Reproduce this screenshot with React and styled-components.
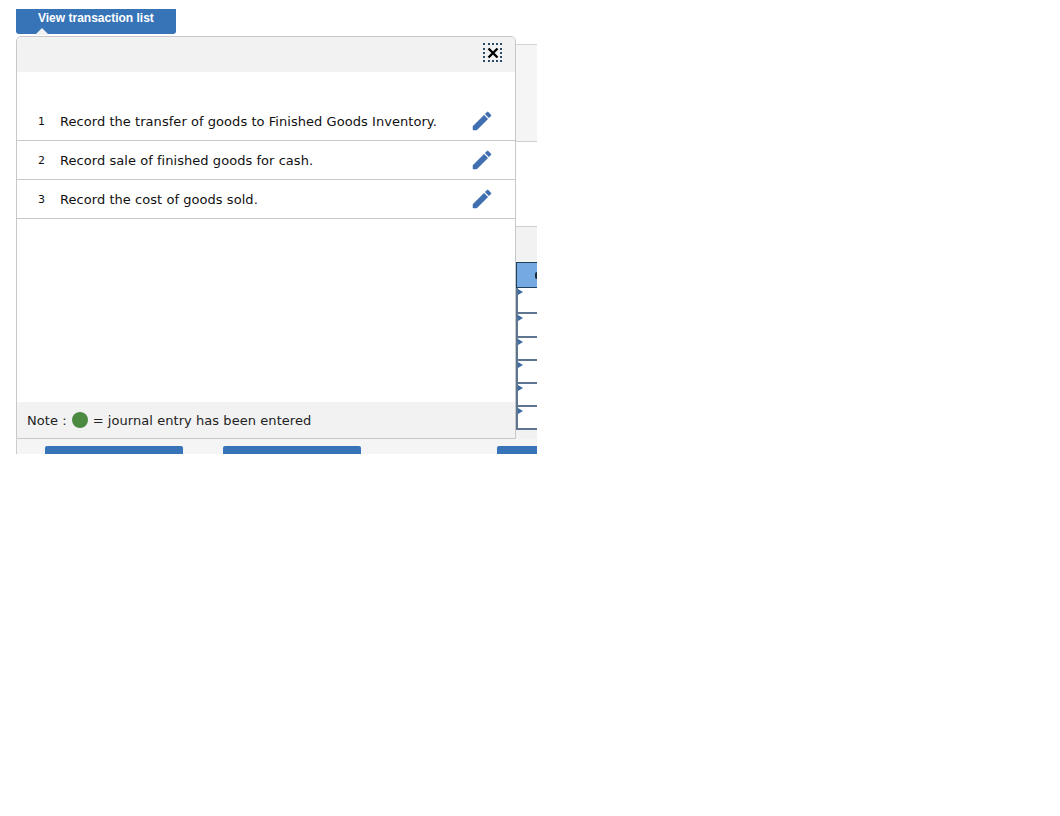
import React from "react";
import styled, { createGlobalStyle } from "styled-components";

const Global = createGlobalStyle`
  html, body { margin: 0; padding: 0; background: #fff; }
  body { font-family: "DejaVu Sans", Verdana, sans-serif; }
`;

const Page = styled.div`
  padding: 9px 0 0 16px;
`;

const Stage = styled.div`
  position: relative;
  width: 521px;
  height: 445px;
  overflow: hidden;
  background: #fff;
`;

const TabButton = styled.button`
  display: block;
  box-sizing: border-box;
  width: 160px;
  height: 25px;
  margin: 0;
  padding: 0 0 8px 22px;
  border: 0;
  border-radius: 0 0 3px 3px;
  background: #3673b7;
  color: #fff;
  font: bold 12px "Liberation Sans", Arial, sans-serif;
  text-align: left;
`;

const Behind = styled.div`
  padding: 10px 0 0 0;
  display: flex;
  flex-direction: column;
  background: #fff;
`;

const Summary = styled.div`
  height: 96px;
  background: #f5f5f5;
  border-top: 1px solid #d4d4d4;
  border-bottom: 1px solid #cfcfcf;
`;

const Gap = styled.div`
  height: 84px;
`;

const Worksheet = styled.div`
  height: 213px;
  background: #f2f2f2;
  border-top: 1px solid #cfcfcf;
  padding: 35px 0 0 500px;
  box-sizing: border-box;
`;

const SheetHeader = styled.div`
  position: relative;
  box-sizing: border-box;
  height: 26px;
  background: #74a9e2;
  border: 1px solid #20405f;
  border-right: 0;
  &::after {
    content: "";
    position: absolute;
    right: 0;
    top: 9px;
    width: 2px;
    height: 7px;
    border-radius: 2px 0 0 2px;
    background: #1a2a3a;
  }
`;

const SheetRow = styled.div`
  position: relative;
  box-sizing: border-box;
  height: ${(p) => p.$h}px;
  background: #fff;
  border-left: 2px solid #5d7690;
  border-bottom: 2px solid #5d7690;
  &::before {
    content: "";
    position: absolute;
    left: 0;
    top: 1px;
    border-left: 5px solid #3f6da3;
    border-top: 3px solid transparent;
    border-bottom: 3px solid transparent;
  }
`;

const Footer = styled.div`
  display: flex;
  background: #f5f5f6;
  border-left: 1px solid #cccccc;
  padding: 7px 0 0 28px;
  gap: 40px;
`;

const FooterButton = styled.div`
  width: 138px;
  height: 20px;
  flex: none;
  background: #3673b7;
  border-radius: 2px 2px 0 0;
  margin-left: ${(p) => p.$ml || 0}px;
`;

const Panel = styled.div`
  position: absolute;
  left: 0;
  top: 27px;
  box-sizing: border-box;
  width: 500px;
  height: 403px;
  display: flex;
  flex-direction: column;
  background: #fff;
  border: 1px solid #c8c8c8;
  border-radius: 5px 5px 0 0;
  color: #111;
`;

const Caret = styled.div`
  position: absolute;
  left: 18px;
  top: -9px;
  width: 0;
  height: 0;
  border-left: 7px solid transparent;
  border-right: 7px solid transparent;
  border-bottom: 7px solid #f2f2f2;
`;

const PanelHead = styled.div`
  flex: none;
  height: 35px;
  background: #f2f2f2;
  border-radius: 5px 5px 0 0;
  display: flex;
  justify-content: flex-end;
  align-items: flex-start;
  padding: 6px 13px 0 0;
  box-sizing: border-box;
`;

const Close = styled.div`
  box-sizing: border-box;
  width: 19px;
  height: 19px;
  border: 2px dotted #2c4a6b;
  display: flex;
  align-items: center;
  justify-content: center;
  color: #000;
`;

const List = styled.div`
  flex: 1;
  padding-top: 30px;
`;

const Row = styled.div`
  box-sizing: border-box;
  height: 39px;
  display: flex;
  align-items: center;
  border-bottom: 1px solid #c8c8c8;
  padding-left: 21px;
  font-size: 13px;
  letter-spacing: 0.05px;
`;

const RowNum = styled.span`
  width: 22px;
  flex: none;
  font-size: 11px;
`;

const RowText = styled.span`
  flex: 1;
`;

const Edit = styled.span`
  flex: none;
  width: 20px;
  height: 20px;
  margin-right: 23px;
  display: block;
`;

const Note = styled.div`
  flex: none;
  height: 36px;
  background: #f2f2f2;
  display: flex;
  align-items: center;
  padding-left: 10px;
  font-size: 13px;
  letter-spacing: 0.06px;
  color: #222;
`;

const Dot = styled.span`
  width: 16px;
  height: 16px;
  border-radius: 50%;
  background: #4c8a42;
  margin: 0 5px 0 5px;
`;

const Pencil = () => (
  <svg viewBox="0 0 24 24" width="24" height="24" style={{ margin: "-2px" }} fill="#3f6fb0" stroke="#3f6fb0" strokeWidth="0.5">
    <path d="M3 17.25V21h3.75L17.81 9.94l-3.75-3.75L3 17.25zM20.71 7.04a1 1 0 0 0 0-1.41l-2.34-2.34a1 1 0 0 0-1.41 0l-1.83 1.83 3.75 3.75 1.83-1.83z" />
  </svg>
);

const rows = [
  "Record the transfer of goods to Finished Goods Inventory.",
  "Record sale of finished goods for cash.",
  "Record the cost of goods sold.",
];

export default function App() {
  return (
    <Page>
      <Global />
      <Stage>
        <TabButton>View transaction list</TabButton>
        <Behind>
          <Summary />
          <Gap />
          <Worksheet>
            <SheetHeader />
            {[26, 24, 23, 23, 23, 23].map((h, i) => (
              <SheetRow key={i} $h={h} />
            ))}
          </Worksheet>
          <Footer>
            <FooterButton />
            <FooterButton />
            <FooterButton $ml={96} />
          </Footer>
        </Behind>
        <Panel>
          <Caret />
          <PanelHead>
            <Close>
              <svg width="12" height="12" viewBox="0 0 12 12" stroke="#000" strokeWidth="2.4">
                <path d="M1.5 1.5l9 9M10.500 1.500l-9 9" />
              </svg>
            </Close>
          </PanelHead>
          <List>
            {rows.map((t, i) => (
              <Row key={i}>
                <RowNum>{i + 1}</RowNum>
                <RowText>{t}</RowText>
                <Edit><Pencil /></Edit>
              </Row>
            ))}
          </List>
          <Note>
            Note :<Dot />= journal entry has been entered
          </Note>
        </Panel>
      </Stage>
    </Page>
  );
}
